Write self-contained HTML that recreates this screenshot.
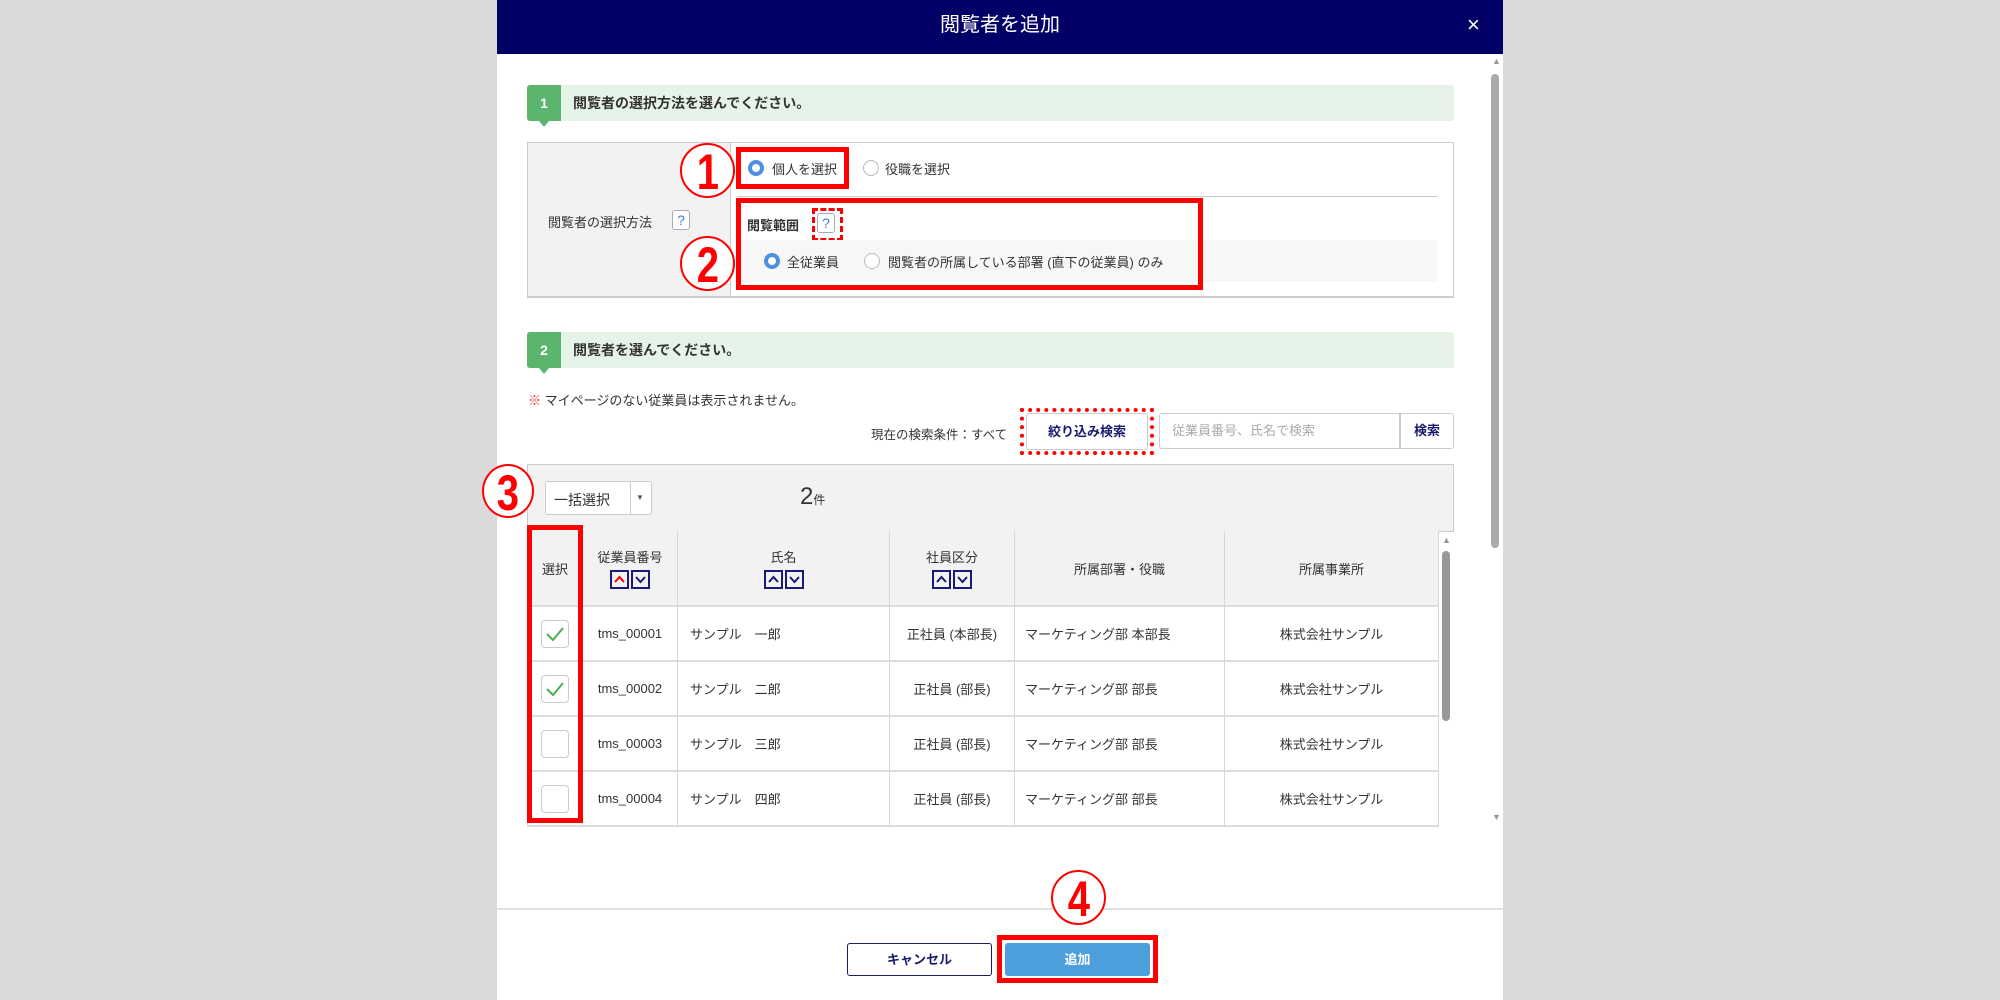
<!DOCTYPE html>
<html><head><meta charset="utf-8">
<style>
*{box-sizing:border-box;margin:0;padding:0}
body{width:2000px;height:1000px;background:#dadada;font-family:"Liberation Sans","Noto Sans CJK JP",sans-serif;color:#333;position:relative;overflow:hidden;font-size:13px}
.a{position:absolute}
#modal{left:497px;top:0;width:1006px;height:1000px;background:#fff}
.hdr{left:497px;top:0;width:1006px;height:54px;background:#000066;color:#fff;font-size:20px;text-align:center;line-height:50px}
.sec{left:527px;width:927px;height:36px;background:#e6f3e8;border-radius:3px}
.badge{left:0;top:0;width:34px;height:36px;background:#5cb56c;color:#fff;font-weight:bold;text-align:center;line-height:36px;font-size:14px;border-radius:3px 0 0 3px}
.sec .t{left:46px;top:0;line-height:36px;font-weight:bold;font-size:14px}
.tri{left:12px;top:36px;width:0;height:0;border-left:5px solid transparent;border-right:5px solid transparent;border-top:6px solid #5cb56c}
.radio{width:16px;height:16px;border-radius:50%;border:1px solid #bbb;background:#fff}
.radio.on{border:4px solid #4d8fe0}
.q{width:18px;height:20px;border:1px solid #aab;border-radius:3px;color:#3a7fd6;font-size:14px;text-align:center;line-height:18px;background:#fff}
.red{border:5px solid #f00}
.circ{width:55px;height:55px;border:2px solid #f00;border-radius:50%;color:#f00;font-weight:bold;font-size:50px;text-align:center;line-height:54px;font-family:"Liberation Sans Narrow","Liberation Sans",sans-serif;background:#fff;overflow:hidden}
.circ span{display:inline-block;transform:scaleX(.8)}
.cell{border-right:1px solid #d6d6d6;border-bottom:2px solid #ddd;display:flex;align-items:center;font-size:13px}
.hc{background:#f2f2f2;flex-direction:column;justify-content:center}
.arr{display:inline-block;width:19px;height:19px;border:2px solid #1a1a7a;margin:4px 1px 0;vertical-align:top}
.arr svg{display:block}
.cb{width:28px;height:28px;border:1px solid #ccc;border-radius:4px;background:#fff}
</style></head><body>
<div id="modal" class="a"></div>
<div class="a hdr">閲覧者を追加</div>
<div class="a" style="left:1467px;top:12px;color:#fff;font-size:22px">×</div>
<div class="a" style="left:1492px;top:56px;color:#999;font-size:9px">▲</div>
<div class="a" style="left:1491px;top:74px;width:8px;height:474px;background:#aaa;border-radius:4px"></div>
<div class="a" style="left:1492px;top:812px;color:#999;font-size:9px">▼</div>

<div class="a sec" style="top:85px"><div class="a badge">1</div><div class="a tri"></div><div class="a t">閲覧者の選択方法を選んでください。</div></div>
<div class="a" style="left:527px;top:142px;width:927px;height:156px;border:1px solid #ccc;border-bottom:2px solid #ccc"></div>
<div class="a" style="left:528px;top:143px;width:203px;height:153px;background:#f2f2f2;border-right:1px solid #ccc"></div>
<div class="a" style="left:548px;top:212px">閲覧者の選択方法</div>
<div class="a q" style="left:672px;top:210px">?</div>
<div class="a radio on" style="left:748px;top:160px"></div>
<div class="a" style="left:772px;top:159px">個人を選択</div>
<div class="a radio" style="left:863px;top:160px"></div>
<div class="a" style="left:885px;top:159px">役職を選択</div>
<div class="a" style="left:737px;top:196px;width:701px;height:1px;background:#ccc"></div>
<div class="a" style="left:747px;top:215px;font-weight:bold">閲覧範囲</div>
<div class="a q" style="left:817px;top:213px">?</div>
<div class="a" style="left:812px;top:208px;width:31px;height:33px;border:3px dashed #f00"></div>
<div class="a" style="left:737px;top:240px;width:701px;height:42px;background:#f7f7f7"></div>
<div class="a radio on" style="left:764px;top:253px"></div>
<div class="a" style="left:787px;top:252px">全従業員</div>
<div class="a radio" style="left:864px;top:253px"></div>
<div class="a" style="left:888px;top:252px">閲覧者の所属している部署 (直下の従業員) のみ</div>
<div class="a red" style="left:736px;top:147px;width:113px;height:42px"></div>
<div class="a red" style="left:736px;top:198px;width:467px;height:92px"></div>
<div class="a circ" style="left:680px;top:143px"><span>1</span></div>
<div class="a circ" style="left:680px;top:236px"><span>2</span></div>

<div class="a sec" style="top:332px"><div class="a badge">2</div><div class="a tri"></div><div class="a t">閲覧者を選んでください。</div></div>
<div class="a" style="left:528px;top:390px"><span style="color:#e33">※</span> マイページのない従業員は表示されません。</div>
<div class="a" style="left:871px;top:424px;font-size:12.5px">現在の検索条件：すべて</div>
<div class="a" style="left:1026px;top:413px;width:122px;height:37px;border:1px solid #ccc;border-radius:3px;background:#fff;color:#1a1a6e;font-weight:bold;text-align:center;line-height:35px">絞り込み検索</div>
<div class="a" style="left:1020px;top:408px;width:134px;height:47px;border:4px dotted #f00"></div>
<div class="a" style="left:1159px;top:413px;width:241px;height:36px;border:1px solid #ccc;border-radius:3px 0 0 3px;color:#aaa;padding-left:12px;line-height:34px">従業員番号、氏名で検索</div>
<div class="a" style="left:1400px;top:413px;width:54px;height:36px;border:1px solid #ccc;border-radius:0 3px 3px 0;color:#1a1a6e;font-weight:bold;text-align:center;line-height:34px">検索</div>

<div class="a" style="left:527px;top:464px;width:927px;height:68px;background:#f2f2f2;border:1px solid #ccc"></div>
<div class="a" style="left:545px;top:481px;width:107px;height:34px;border:1px solid #ccc;border-radius:3px;background:#fff"></div>
<div class="a" style="left:554px;top:490px;font-size:14px">一括選択</div>
<div class="a" style="left:630px;top:482px;width:1px;height:32px;background:#ccc"></div>
<div class="a" style="left:636px;top:493px;font-size:8px;color:#555">▼</div>
<div class="a" style="left:800px;top:483px;font-size:24px">2<span style="font-size:12px">件</span></div>
<div class="a circ" style="left:482px;top:464px;width:52px;height:54px"><span>3</span></div>

<div class="a" style="left:527px;top:531px;width:912px;height:296px;overflow:hidden;border-left:1px solid #ddd">
<div style="display:grid;grid-template-columns:55px 95px 212px 125px 210px 214px;grid-auto-rows:76px 55px 55px 55px 55px">
<div class="cell hc">選択</div>
<div class="cell hc"><div>従業員番号</div><div><span class="arr"><svg width="15" height="15"><path d="M3 10 L7.5 5 L12 10" stroke="#e00" stroke-width="2" fill="none"/></svg></span><span class="arr"><svg width="15" height="15"><path d="M3 5 L7.5 10 L12 5" stroke="#1a1a7a" stroke-width="2" fill="none"/></svg></span></div></div>
<div class="cell hc"><div>氏名</div><div><span class="arr"><svg width="15" height="15"><path d="M3 10 L7.5 5 L12 10" stroke="#1a1a7a" stroke-width="2" fill="none"/></svg></span><span class="arr"><svg width="15" height="15"><path d="M3 5 L7.5 10 L12 5" stroke="#1a1a7a" stroke-width="2" fill="none"/></svg></span></div></div>
<div class="cell hc"><div>社員区分</div><div><span class="arr"><svg width="15" height="15"><path d="M3 10 L7.5 5 L12 10" stroke="#1a1a7a" stroke-width="2" fill="none"/></svg></span><span class="arr"><svg width="15" height="15"><path d="M3 5 L7.5 10 L12 5" stroke="#1a1a7a" stroke-width="2" fill="none"/></svg></span></div></div>
<div class="cell hc">所属部署・役職</div>
<div class="cell hc">所属事業所</div>

<div class="cell" style="justify-content:center"><div class="cb"><svg width="26" height="26"><path d="M5 13 L11 19 L21 7" stroke="#4caf50" stroke-width="2" fill="none"/></svg></div></div><div class="cell" style="justify-content:center">tms_00001</div><div class="cell" style="padding-left:12px">サンプル　一郎</div><div class="cell" style="justify-content:center">正社員 (本部長)</div><div class="cell" style="padding-left:10px">マーケティング部 本部長</div><div class="cell" style="justify-content:center">株式会社サンプル</div>
<div class="cell" style="justify-content:center"><div class="cb"><svg width="26" height="26"><path d="M5 13 L11 19 L21 7" stroke="#4caf50" stroke-width="2" fill="none"/></svg></div></div><div class="cell" style="justify-content:center">tms_00002</div><div class="cell" style="padding-left:12px">サンプル　二郎</div><div class="cell" style="justify-content:center">正社員 (部長)</div><div class="cell" style="padding-left:10px">マーケティング部 部長</div><div class="cell" style="justify-content:center">株式会社サンプル</div>
<div class="cell" style="justify-content:center"><div class="cb"></div></div><div class="cell" style="justify-content:center">tms_00003</div><div class="cell" style="padding-left:12px">サンプル　三郎</div><div class="cell" style="justify-content:center">正社員 (部長)</div><div class="cell" style="padding-left:10px">マーケティング部 部長</div><div class="cell" style="justify-content:center">株式会社サンプル</div>
<div class="cell" style="justify-content:center"><div class="cb"></div></div><div class="cell" style="justify-content:center">tms_00004</div><div class="cell" style="padding-left:12px">サンプル　四郎</div><div class="cell" style="justify-content:center">正社員 (部長)</div><div class="cell" style="padding-left:10px">マーケティング部 部長</div><div class="cell" style="justify-content:center">株式会社サンプル</div>
</div></div>
<div class="a" style="left:1442px;top:535px;color:#999;font-size:9px">▲</div>
<div class="a" style="left:1442px;top:551px;width:8px;height:170px;background:#999;border-radius:4px"></div>
<div class="a red" style="left:527px;top:525px;width:56px;height:298px"></div>

<div class="a" style="left:497px;top:908px;width:1006px;height:2px;background:#e0e0e0"></div>
<div class="a" style="left:847px;top:943px;width:145px;height:33px;border:1px solid #1a1a6e;border-radius:3px;background:#fff;color:#1a1a6e;font-weight:bold;text-align:center;line-height:31px">キャンセル</div>
<div class="a" style="left:1005px;top:943px;width:145px;height:33px;border-radius:3px;background:#4d9fdc;color:#fff;font-weight:bold;text-align:center;line-height:33px">追加</div>
<div class="a red" style="left:997px;top:935px;width:161px;height:48px"></div>
<div class="a circ" style="left:1051px;top:870px"><span>4</span></div>
</body></html>
